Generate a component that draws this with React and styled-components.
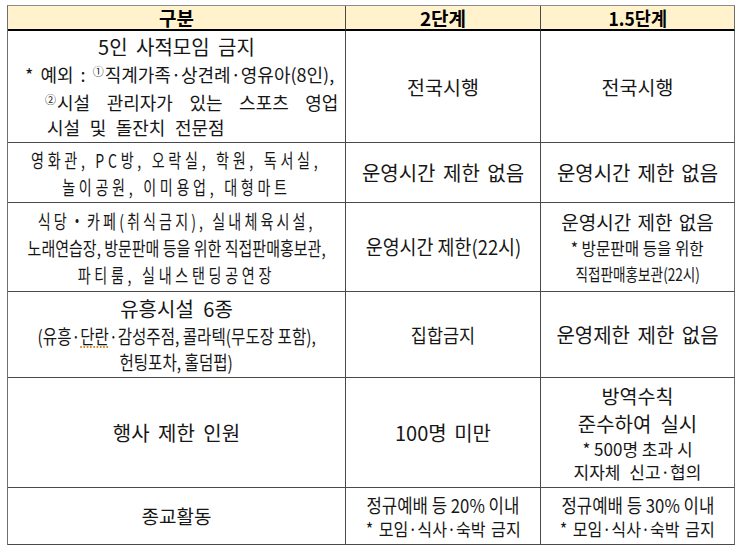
import React from "react";
import styled, { createGlobalStyle } from "styled-components";

const GlobalStyle = createGlobalStyle`
  body {
    margin: 0;
    background: #ffffff;
  }
`;

const Table = styled.div`
  display: grid;
  grid-template-columns: 338px 195px 194px;
  grid-template-rows: 25px 112px 60px 89px 86px 110px 57px;
  width: max-content;
  margin: 5px 0 0 7px;
  border-top: 1px solid #8c8c8c;
  border-left: 1px solid #6e6e6e;
  font-family: "Noto Sans CJK KR", "Noto Sans", sans-serif;
  color: #161616;
`;

const Cell = styled.div`
  box-sizing: border-box;
  display: flex;
  flex-direction: column;
  justify-content: center;
  align-items: stretch;
  min-width: 0;
  border-right: 1px solid ${(p) => (p.$last ? "#6e6e6e" : "#4a4a4a")};
  border-bottom: 1px solid #4a4a4a;
`;

const HeadCell = styled(Cell)`
  background: #fff2cc;
  border-bottom: 2px solid #000000;
  font-weight: 700;
  color: #000000;
`;

const Line = styled.div`
  align-self: ${(p) => (p.$left ? "stretch" : "center")};
  width: ${(p) => (p.$left ? "auto" : "max-content")};
  font-size: ${(p) => p.$size || 19}px;
  line-height: ${(p) => p.$h || 26}px;
  letter-spacing: ${(p) => p.$ls || 0}px;
  word-spacing: ${(p) => p.$ws || 0}px;
  padding-left: ${(p) => p.$indent || 0}px;
  text-align: ${(p) => (p.$left ? "left" : "center")};
  white-space: nowrap;
  transform: scaleX(${(p) => p.$sx || 1});
  transform-origin: ${(p) => (p.$left ? "left" : "center")} center;
`;

const Note = styled.div`
  padding-left: 17px;
`;

const Sup = styled.span`
  font-size: 11px;
  vertical-align: 6px;
  margin-right: 1px;
  word-spacing: 0;
`;

const Dotted = styled.span`
  text-decoration: underline dotted #d08a2a;
  text-underline-offset: 3px;
`;

export default function App() {
  return (
    <>
      <GlobalStyle />
      <Table>
        <HeadCell>
          <Line $size={19} $h={22}>구분</Line>
        </HeadCell>
        <HeadCell>
          <Line $size={19} $h={22}>2단계</Line>
        </HeadCell>
        <HeadCell $last>
          <Line $size={19} $h={22} $sx={0.92}>1.5단계</Line>
        </HeadCell>

        <Cell>
          <Line $size={20} $h={25} $ws={4}>5인 사적모임 금지</Line>
          <Note>
            <Line $left $size={18} $h={25} $ws={3}>
              * 예외 : <Sup>①</Sup>직계가족·상견례·영유아(8인),
            </Line>
            <Line $left $size={18} $h={25} $indent={20} $ws={12.5}>
              <Sup>②</Sup>시설 관리자가 있는 스포츠 영업
            </Line>
            <Line $left $size={18} $h={25} $indent={22} $ws={5.5}>
              시설 및 돌잔치 전문점
            </Line>
          </Note>
        </Cell>
        <Cell>
          <Line $size={19.5}>전국시행</Line>
        </Cell>
        <Cell $last>
          <Line $size={19.5}>전국시행</Line>
        </Cell>

        <Cell>
          <Line $size={19} $h={27} $sx={0.74} $ls={5}>
            영화관, PC방, 오락실, 학원, 독서실,
          </Line>
          <Line $size={19} $h={27} $sx={0.74} $ls={5}>
            놀이공원, 이미용업, 대형마트
          </Line>
        </Cell>
        <Cell>
          <Line $size={20} $ws={3}>운영시간 제한 없음</Line>
        </Cell>
        <Cell $last>
          <Line $size={20} $ws={2.5}>운영시간 제한 없음</Line>
        </Cell>

        <Cell>
          <Line $size={19} $h={27} $sx={0.74} $ls={4.2}>
            식당・카페(취식금지), 실내체육시설,
          </Line>
          <Line $size={19} $h={27} $sx={0.79}>
            노래연습장, 방문판매 등을 위한 직접판매홍보관,
          </Line>
          <Line $size={19} $h={27} $sx={0.74} $ls={5}>
            파티룸, 실내스탠딩공연장
          </Line>
        </Cell>
        <Cell>
          <Line $size={20} $sx={0.92}>운영시간 제한(22시)</Line>
        </Cell>
        <Cell $last>
          <Line $size={19} $h={27} $ws={2}>운영시간 제한 없음</Line>
          <Line $size={17} $h={26} $sx={0.92}>* 방문판매 등을 위한</Line>
          <Line $size={17} $h={25} $sx={0.8}>직접판매홍보관(22시)</Line>
        </Cell>

        <Cell>
          <Line $size={20} $h={27} $ws={5}>유흥시설 6종</Line>
          <Line $size={19} $h={27} $sx={0.82}>
            (유흥·<Dotted>단란</Dotted>·감성주점, 콜라텍(무도장 포함),
          </Line>
          <Line $size={19} $h={26} $sx={0.82}>헌팅포차, 홀덤펍)</Line>
        </Cell>
        <Cell>
          <Line $size={19} $sx={0.92}>집합금지</Line>
        </Cell>
        <Cell $last>
          <Line $size={20} $ws={3}>운영제한 제한 없음</Line>
        </Cell>

        <Cell>
          <Line $size={20} $ws={4}>행사 제한 인원</Line>
        </Cell>
        <Cell>
          <Line $size={20} $ws={3}>100명 미만</Line>
        </Cell>
        <Cell $last>
          <Line $size={19.5} $h={28}>방역수칙</Line>
          <Line $size={20} $h={27} $ws={4.5}>준수하여 실시</Line>
          <Line $size={17} $h={24}>* 500명 초과 시</Line>
          <Line $size={17} $h={22} $ws={5}>지자체 신고·협의</Line>
        </Cell>

        <Cell>
          <Line $size={19}>종교활동</Line>
        </Cell>
        <Cell>
          <Line $size={19} $h={25} $sx={0.88}>정규예배 등 20% 이내</Line>
          <Line $size={17.5} $h={24} $sx={0.92} $ws={2}>* 모임·식사·숙박 금지</Line>
        </Cell>
        <Cell $last>
          <Line $size={19} $h={25} $sx={0.88}>정규예배 등 30% 이내</Line>
          <Line $size={17.5} $h={24} $sx={0.92} $ws={2}>* 모임·식사·숙박 금지</Line>
        </Cell>
      </Table>
    </>
  );
}
